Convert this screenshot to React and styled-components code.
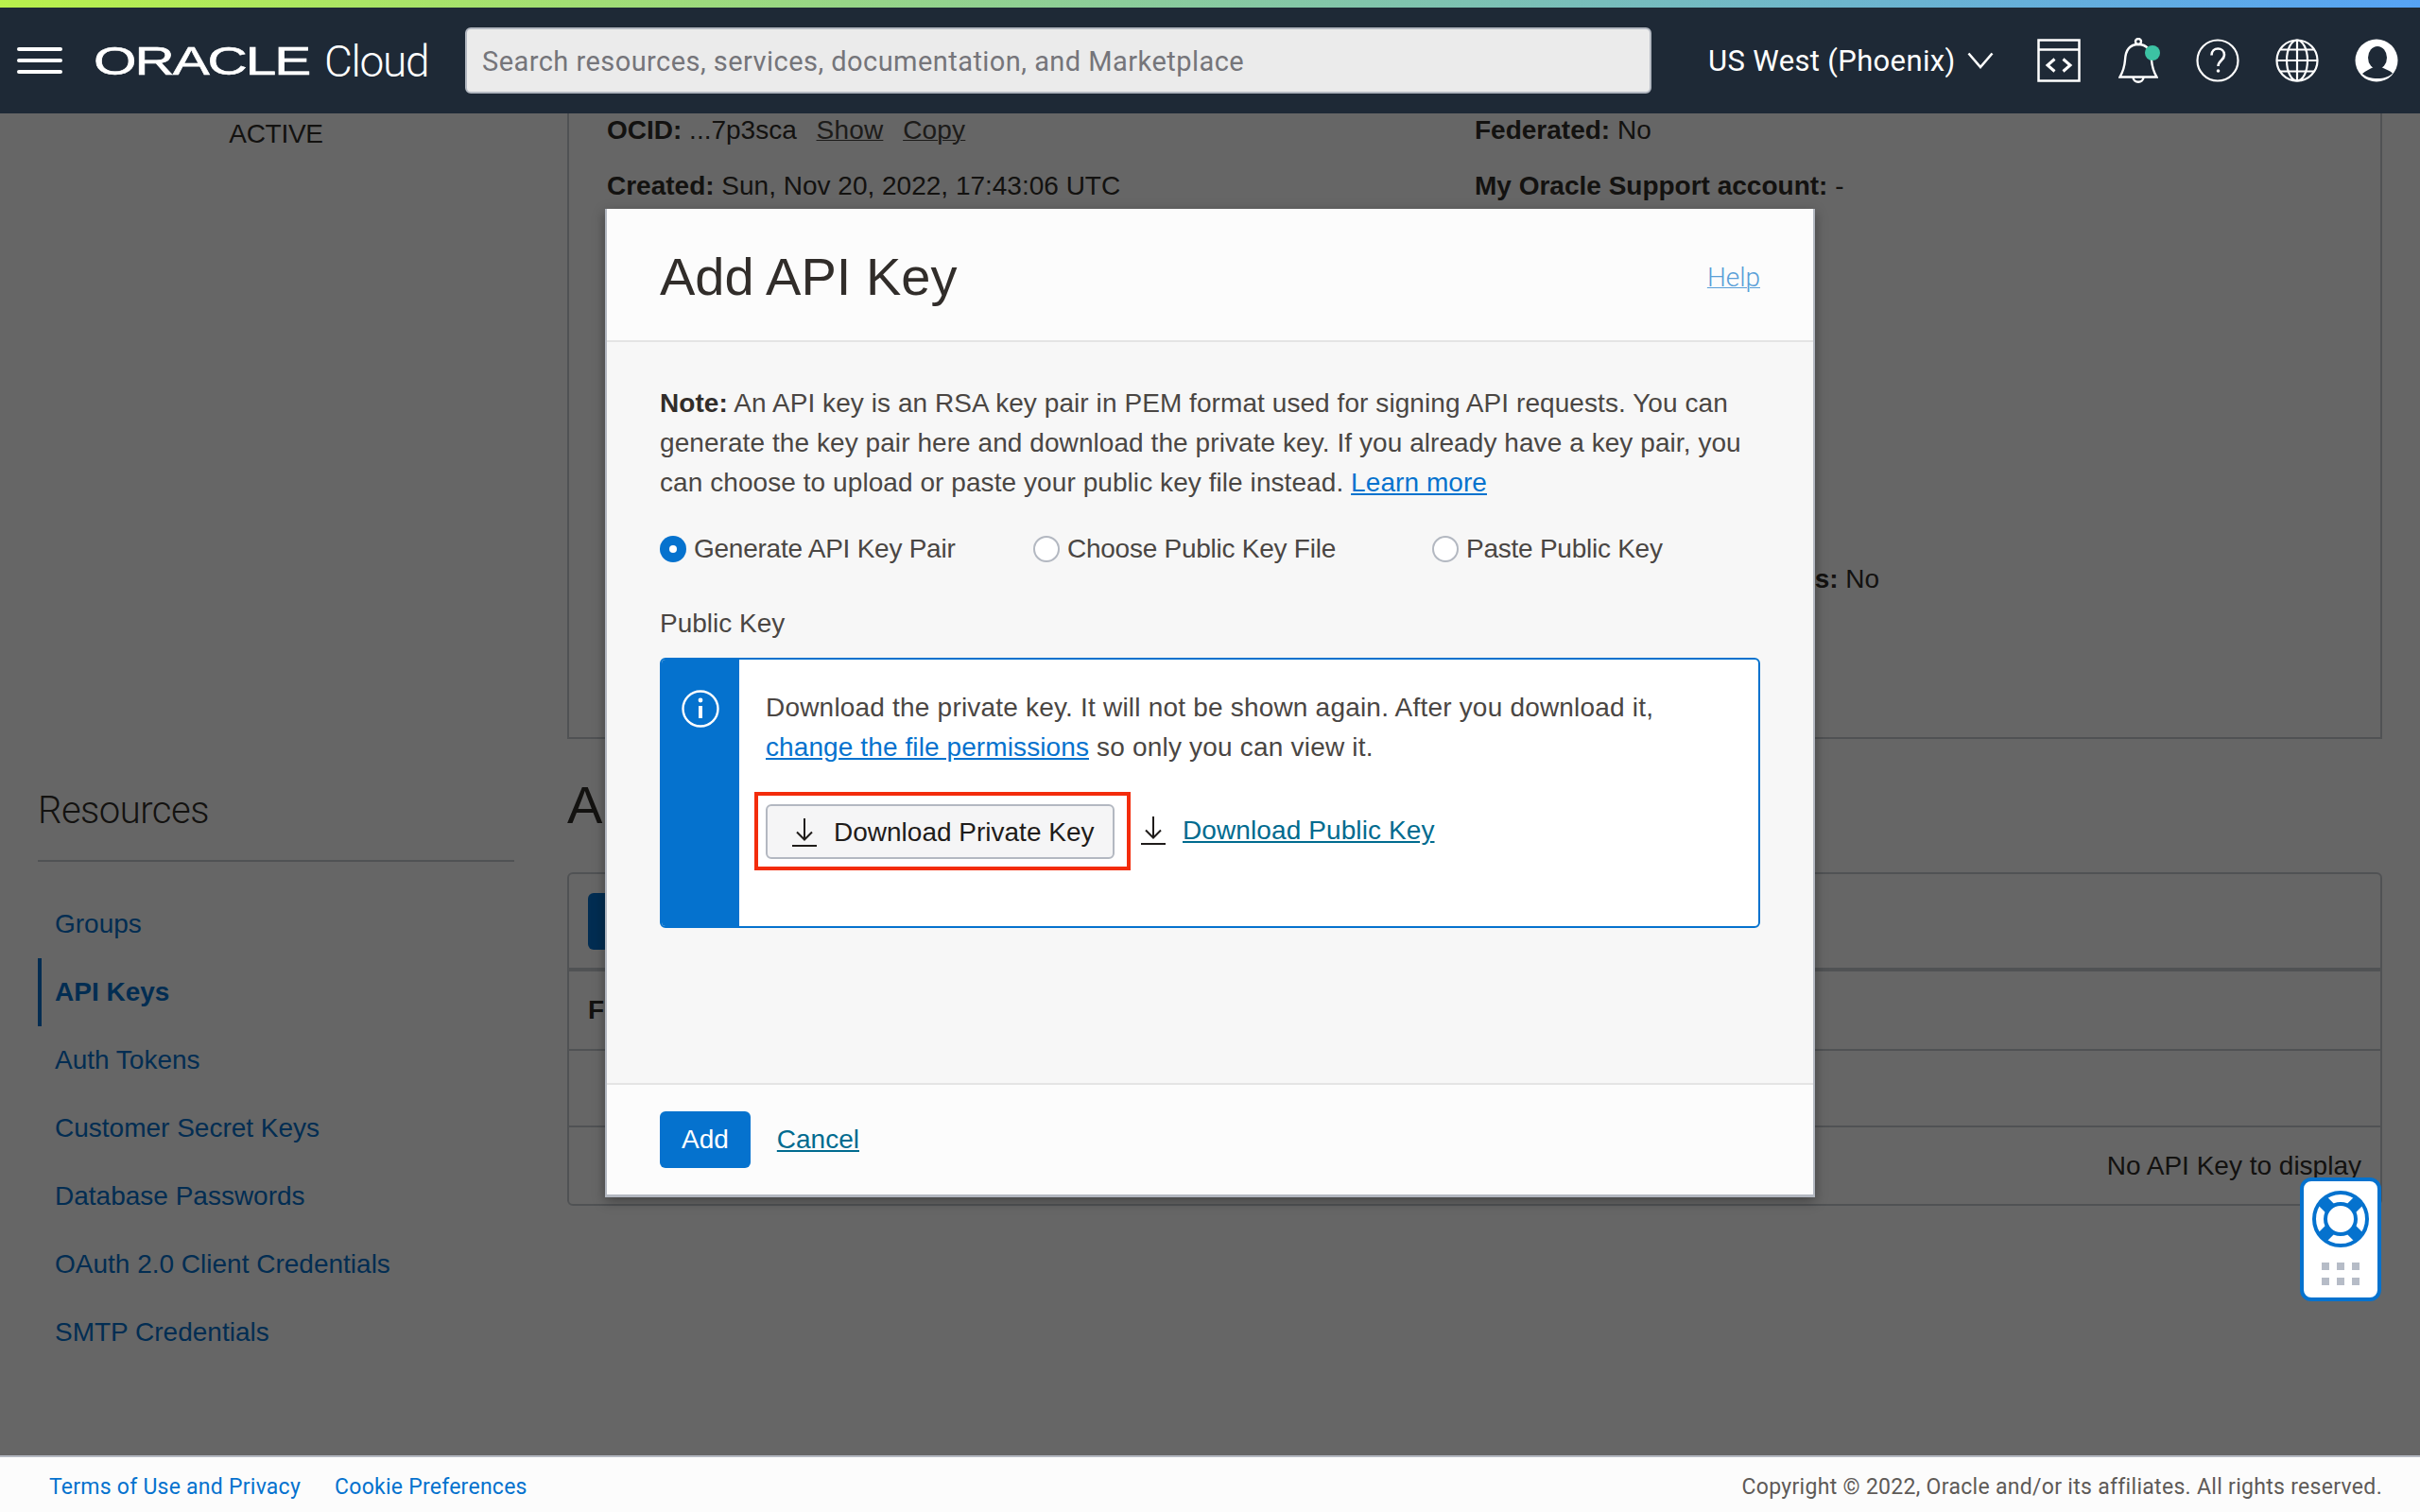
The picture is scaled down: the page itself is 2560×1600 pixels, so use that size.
import React from "react";
import styled, { createGlobalStyle } from "styled-components";

const GlobalStyle = createGlobalStyle`
  html, body {
    margin: 0;
    padding: 0;
    background: #fff;
  }
  * {
    box-sizing: border-box;
  }
  body {
    font-family: "Liberation Sans", Arial, sans-serif;
    color: #312d2a;
  }
`;

const Page = styled.div`
  display: flex;
  flex-direction: column;
  height: 100vh;
  overflow: hidden;
`;
const Stripe = styled.div`
  height: 8px;
  flex: none;
  background: linear-gradient(90deg, #b9f04c 0%, #56a3f5 100%);
`;
const Header = styled.header`
  flex: none;
  display: flex;
  align-items: center;
  height: 112px;
  padding: 0 4px 0 18px;
  background: #1e2936;
  color: #fff;
`;
const Burger = styled.div`
  display: flex;
  flex-direction: column;
  gap: 8px;
  width: 48px;
  margin-right: 33px;
  span {
    height: 4px;
    border-radius: 2px;
    background: #fff;
  }
`;
const Logo = styled.div`
  flex: none;
  display: flex;
  align-items: center;
  width: 365px;
  margin-right: 28px;
`;
const LogoMark = styled.span`
  flex: none;
  display: block;
  width: 229px;
  margin-right: 15px;
  font-size: 43px;
  line-height: 44px;
  letter-spacing: -1.5px;
  -webkit-text-stroke: 0.6px #fff;
  transform: scaleX(1.36);
  transform-origin: left center;
`;
const LogoText = styled.span`
  margin-top: 2px;
  font-family: Roboto, sans-serif;
  font-weight: 300;
  font-size: 46px;
  line-height: 44px;
  letter-spacing: -1.3px;
`;
const SearchBox = styled.div`
  flex: none;
  display: flex;
  align-items: center;
  width: 1255px;
  height: 70px;
  padding: 2px 16px 0;
  background: #ebebeb;
  border: 2px solid #b3b8c1;
  border-radius: 6px;
  color: #75757a;
  font-family: Roboto, sans-serif;
  font-size: 29px;
  letter-spacing: 0.45px;
`;
const Region = styled.div`
  display: flex;
  align-items: center;
  gap: 12px;
  margin-left: 60px;
  font-family: Roboto, sans-serif;
  font-size: 31px;
  letter-spacing: 0.35px;
`;
const IconGroup = styled.div`
  display: flex;
  margin-left: auto;
`;
const IconSlot = styled.div`
  position: relative;
  display: flex;
  justify-content: center;
  align-items: center;
  width: 84px;
`;
const BellDot = styled.span`
  position: absolute;
  top: 8px;
  left: 49px;
  width: 16px;
  height: 16px;
  border-radius: 50%;
  background: #3cc2a3;
`;

const Main = styled.main`
  position: relative;
  flex: 1;
  display: flex;
  min-height: 0;
  overflow: hidden;
  background: #fff;
  font-size: 28px;
`;
const Sidebar = styled.aside`
  flex: none;
  width: 560px;
  margin-left: 40px;
  padding-right: 56px;
`;
const StateLabel = styled.div`
  height: 44px;
  line-height: 44px;
  text-align: center;
  letter-spacing: -0.3px;
  margin-bottom: 670px;
`;
const SideTitle = styled.h2`
  margin: 0;
  height: 48px;
  font-family: Roboto, sans-serif;
  font-size: 40px;
  line-height: 48px;
  font-weight: 300;
  letter-spacing: -0.5px;
`;
const SideRule = styled.div`
  height: 2px;
  margin-top: 28px;
  margin-bottom: 30px;
  background: #c8ccd2;
`;
const SideLink = styled.a`
  display: flex;
  align-items: center;
  height: 72px;
  padding-left: ${(p) => (p.$active ? "14px" : "18px")};
  border-left: ${(p) => (p.$active ? "4px solid #0572ce" : "0")};
  color: #0572ce;
  font-weight: ${(p) => (p.$active ? 700 : 400)};
`;
const Content = styled.section`
  flex: 1;
  min-width: 0;
  margin-right: 40px;
`;
const Details = styled.div`
  display: grid;
  grid-template-columns: 918px 1fr;
  height: 662px;
  padding: 1px 0 0 40px;
  border: 2px solid #c8ccd2;
  border-top: 0;
`;
const DetailCol = styled.div`
  display: flex;
  flex-direction: column;
`;
const DetailRow = styled.div`
  height: 34px;
  line-height: 34px;
  margin-left: ${(p) => p.$indent || 0}px;
  margin-bottom: ${(p) => p.$gap || 25}px;
  white-space: nowrap;
  b {
    font-weight: 700;
  }
  a {
    margin-left: 13px;
    letter-spacing: 0.2px;
    text-decoration: underline;
    text-decoration-thickness: 1px;
    color: #4a4643;
  }
`;
const SectionTitle = styled.h1`
  margin: 39px 0 0;
  height: 62px;
  font-size: 56px;
  line-height: 62px;
  font-weight: 400;
`;
const Table = styled.div`
  margin-top: 40px;
  border: 2px solid #c8ccd2;
  border-radius: 6px;
`;
const Toolbar = styled.div`
  height: 103px;
  padding: 20px;
  border-bottom: 4px solid #c8ccd2;
`;
const PrimaryButton = styled.button`
  height: 60px;
  padding: 0 ${(p) => p.$pad || 22}px;
  border: 0;
  border-radius: 6px;
  background: #0572ce;
  color: #fff;
  font-family: inherit;
  font-size: 28px;
`;
const TableRow = styled.div`
  display: flex;
  align-items: center;
  justify-content: ${(p) => (p.$end ? "flex-end" : "flex-start")};
  height: ${(p) => p.$h || 81}px;
  padding: 0 20px;
  border-bottom: ${(p) => (p.$last ? "0" : "2px solid #c8ccd2")};
  font-weight: ${(p) => (p.$head ? 700 : 400)};
`;

const Overlay = styled.div`
  position: absolute;
  inset: 0;
  display: flex;
  justify-content: center;
  align-items: flex-start;
  padding-top: 101px;
  background: rgba(0, 0, 0, 0.6);
`;
const Modal = styled.div`
  display: flex;
  flex-direction: column;
  width: 1280px;
  height: 1046px;
  background: #f7f7f7;
  border: 2px solid #b3b8c1;
  border-bottom-width: 3px;
  border-top: 0;
  box-shadow: 0 4px 12px rgba(0, 0, 0, 0.35);
`;
const ModalHead = styled.div`
  flex: none;
  display: flex;
  justify-content: space-between;
  align-items: center;
  height: 141px;
  padding: 4px 56px 0;
  background: #fcfcfc;
  border-bottom: 2px solid #e4e4e4;
`;
const ModalTitle = styled.h1`
  margin: 0;
  font-size: 56px;
  font-weight: 400;
  line-height: 64px;
  color: #312d2a;
`;
const HelpLink = styled.a`
  margin-top: 2px;
  color: #5a9fd8;
  font-family: Roboto, sans-serif;
  font-weight: 300;
  font-size: 28px;
  text-decoration: underline;
  text-decoration-thickness: 1px;
`;
const ModalBody = styled.div`
  flex: 1;
  padding: 44px 56px 0;
  color: #4a4643;
`;
const Note = styled.p`
  margin: 0;
  font-size: 28px;
  line-height: 42px;
  letter-spacing: 0.07px;
  b {
    font-weight: 700;
    color: #312d2a;
  }
`;
const TextLink = styled.a`
  color: ${(p) => p.$color || "#0572ce"};
  text-decoration: underline;
`;
const RadioRow = styled.div`
  display: grid;
  grid-template-columns: 395px 422px 1fr;
  margin-top: 28px;
  height: 42px;
`;
const RadioItem = styled.label`
  display: flex;
  align-items: center;
  gap: 8px;
  font-size: 28px;
  letter-spacing: -0.25px;
`;
const RadioMark = styled.span`
  display: flex;
  justify-content: center;
  align-items: center;
  width: 28px;
  height: 28px;
  border-radius: 50%;
  background: ${(p) => (p.$on ? "#0572ce" : "#fff")};
  border: ${(p) => (p.$on ? "0" : "2px solid #b3b8c1")};
  &::after {
    content: "";
    display: ${(p) => (p.$on ? "block" : "none")};
    width: 8px;
    height: 8px;
    border-radius: 50%;
    background: #fff;
  }
`;
const FieldLabel = styled.div`
  margin-top: 37px;
  height: 42px;
  line-height: 42px;
  font-size: 28px;
`;
const InfoBox = styled.div`
  display: flex;
  height: 286px;
  margin-top: 15px;
  background: #fff;
  border: 2px solid #0572ce;
  border-radius: 6px;
  overflow: hidden;
`;
const InfoRail = styled.div`
  flex: none;
  width: 82px;
  padding: 32px 0 0 21px;
  background: #0572ce;
`;
const InfoContent = styled.div`
  flex: 1;
  padding: 30px 0 0 28px;
`;
const InfoText = styled.p`
  margin: 0;
  font-size: 28px;
  line-height: 42px;
  letter-spacing: 0.2px;
  a {
    letter-spacing: 0.1px;
  }
`;
const ActionRow = styled.div`
  display: flex;
  align-items: center;
  margin-top: 26px;
  margin-left: -12px;
`;
const Highlight = styled.div`
  padding: 9px 13px 8px 8px;
  border: 4px solid #f32c0c;
`;
const GhostButton = styled.button`
  display: flex;
  align-items: center;
  gap: 18px;
  width: 369px;
  height: 58px;
  padding: 2px 0 0 26px;
  background: #f5f5f6;
  border: 2px solid #b3b8c1;
  border-radius: 6px;
  color: #1f1c1a;
  font-family: inherit;
  font-size: 28px;
  white-space: nowrap;
`;
const PublicKeyLink = styled.div`
  display: flex;
  align-items: center;
  gap: 18px;
  margin-left: 11px;
  margin-top: -1px;
  font-size: 28px;
  letter-spacing: 0.1px;
`;
const ModalFoot = styled.div`
  flex: none;
  display: flex;
  align-items: center;
  gap: 28px;
  height: 118px;
  padding: 0 56px;
  background: #fcfcfc;
  border-top: 2px solid #e4e4e4;
`;

const HelpWidget = styled.div`
  position: absolute;
  top: 1126px;
  right: 41px;
  display: flex;
  flex-direction: column;
  align-items: center;
  width: 86px;
  height: 131px;
  padding-top: 10px;
  background: #fff;
  border: 4px solid #0572ce;
  border-radius: 12px;
`;
const DotGrid = styled.div`
  display: grid;
  grid-template-columns: repeat(3, 8px);
  gap: 8px;
  margin-top: 16px;
  span {
    height: 8px;
    background: #b6bcc7;
  }
`;

const Footer = styled.footer`
  flex: none;
  display: flex;
  justify-content: space-between;
  align-items: center;
  height: 60px;
  padding: 5px 40px 0 52px;
  background: #fcfcfc;
  border-top: 2px solid #b3b8c1;
  font-family: Roboto, sans-serif;
  font-size: 23px;
  letter-spacing: 0.3px;
`;
const FooterLinks = styled.div`
  display: flex;
  gap: 36px;
  color: #0572ce;
  letter-spacing: 0.25px;
`;
const Copyright = styled.div`
  color: #5e5a57;
`;

const Chevron = () => (
  <svg width="28" height="18" viewBox="0 0 28 18" fill="none" stroke="#fff" strokeWidth="2.6">
    <path d="M1.5 1.5 14 16 26.5 1.5" />
  </svg>
);

const CodeIcon = () => (
  <svg width="46" height="46" viewBox="0 0 46 46" fill="none" stroke="#fff" strokeWidth="2.5">
    <rect x="1.5" y="1.5" width="43" height="43" />
    <path d="M1.5 11.5h43" />
    <path d="M18.5 21.5 11 28l7.5 6.5M27.5 21.5 35 28l-7.5 6.5" strokeWidth="3" />
  </svg>
);

const BellIcon = () => (
  <svg width="42" height="48" viewBox="0 0 42 48" fill="none" stroke="#fff" strokeWidth="2.4">
    <path d="M1.5 41.5c3.5-6 5-11 5.5-18C7.5 13 12 7 21 7s13.5 6 14 16.5c.5 7 2 12 5.5 18z" />
    <circle cx="21" cy="4" r="3" />
    <path d="M15.5 41.5c0 7 11 7 11 0" />
  </svg>
);

const HelpIcon = () => (
  <svg width="46" height="46" viewBox="0 0 46 46" fill="none" stroke="#fff" strokeWidth="2.2">
    <circle cx="23" cy="23" r="21.5" />
    <path d="M16.5 17.5c0-9.5 13.5-9 13.5-.5 0 6-6.5 6-6.5 12" strokeWidth="2.6" />
    <circle cx="23.5" cy="34" r="1.8" fill="#fff" stroke="none" />
  </svg>
);

const GlobeIcon = () => (
  <svg width="46" height="46" viewBox="0 0 46 46" fill="none" stroke="#fff" strokeWidth="2.2">
    <circle cx="23" cy="23" r="21.5" />
    <ellipse cx="23" cy="23" rx="11" ry="21.5" />
    <path d="M23 1.5v43M1.5 23h43M5 11.5h36M5 34.5h36" />
  </svg>
);

const AvatarIcon = () => (
  <svg width="46" height="46" viewBox="0 0 46 46">
    <circle cx="23" cy="23" r="22.5" fill="#fff" />
    <ellipse cx="24" cy="20" rx="10" ry="12" fill="#1e2936" />
    <path d="M8 37c3-3 8-5 12-7h8c4 2 9 3.5 12 6.5-3 3.5-9 5.5-16 5.5-7 0-13-2-16-5z" fill="#1e2936" />
  </svg>
);

const InfoIcon = () => (
  <svg width="40" height="40" viewBox="0 0 40 40" fill="none" stroke="#fff" strokeWidth="2.4">
    <circle cx="20" cy="20" r="18.5" />
    <path d="M20 17v13" strokeWidth="4" />
    <circle cx="20" cy="11" r="2.4" fill="#fff" stroke="none" />
  </svg>
);

const DownloadIcon = () => (
  <svg width="26" height="30" viewBox="0 0 26 30" fill="none" stroke="#1f1c1a" strokeWidth="2">
    <path d="M13 0v22M5 14.5l8 8 8-8" />
    <path d="M0 29h26" />
  </svg>
);

const LifebuoyIcon = () => (
  <svg width="60" height="60" viewBox="0 0 60 60">
    <circle cx="30" cy="30" r="28" fill="#fff" stroke="#0572ce" strokeWidth="4" />
    <path d="M10 10 50 50M50 10 10 50" stroke="#0572ce" strokeWidth="13" />
    <circle cx="30" cy="30" r="16" fill="#fff" stroke="#0572ce" strokeWidth="4" />
  </svg>
);

const sideLinks = [
  "Groups",
  "API Keys",
  "Auth Tokens",
  "Customer Secret Keys",
  "Database Passwords",
  "OAuth 2.0 Client Credentials",
  "SMTP Credentials",
];

const App = () => {
  return (
    <Page>
      <GlobalStyle />
      <Stripe />
      <Header>
        <Burger>
          <span />
          <span />
          <span />
        </Burger>
        <Logo>
          <LogoMark>ORACLE</LogoMark>
          <LogoText>Cloud</LogoText>
        </Logo>
        <SearchBox>Search resources, services, documentation, and Marketplace</SearchBox>
        <Region>
          US West (Phoenix)
          <Chevron />
        </Region>
        <IconGroup>
          <IconSlot>
            <CodeIcon />
          </IconSlot>
          <IconSlot>
            <BellIcon />
            <BellDot />
          </IconSlot>
          <IconSlot>
            <HelpIcon />
          </IconSlot>
          <IconSlot>
            <GlobeIcon />
          </IconSlot>
          <IconSlot>
            <AvatarIcon />
          </IconSlot>
        </IconGroup>
      </Header>
      <Main>
        <Sidebar>
          <StateLabel>ACTIVE</StateLabel>
          <SideTitle>Resources</SideTitle>
          <SideRule />
          {sideLinks.map((item) => (
            <SideLink key={item} $active={item === "API Keys"}>
              {item}
            </SideLink>
          ))}
        </Sidebar>
        <Content>
          <Details>
            <DetailCol>
              <DetailRow>
                <b>OCID:</b> ...7p3sca <a>Show</a> <a>Copy</a>
              </DetailRow>
              <DetailRow>
                <b>Created:</b> Sun, Nov 20, 2022, 17:43:06 UTC
              </DetailRow>
            </DetailCol>
            <DetailCol>
              <DetailRow>
                <b>Federated:</b> No
              </DetailRow>
              <DetailRow $gap={382}>
                <b>My Oracle Support account:</b> -
              </DetailRow>
              <DetailRow $indent={21}>
                <b>Can use SMTP Credentials:</b> No
              </DetailRow>
            </DetailCol>
          </Details>
          <SectionTitle>API Keys</SectionTitle>
          <Table>
            <Toolbar>
              <PrimaryButton>Add API Key</PrimaryButton>
            </Toolbar>
            <TableRow $head $h={84}>
              Fingerprint
            </TableRow>
            <TableRow />
            <TableRow $end $last>
              No API Key to display
            </TableRow>
          </Table>
        </Content>
        <Overlay>
          <Modal>
            <ModalHead>
              <ModalTitle>Add API Key</ModalTitle>
              <HelpLink>Help</HelpLink>
            </ModalHead>
            <ModalBody>
              <Note>
                <b>Note:</b> An API key is an RSA key pair in PEM format used for signing API requests. You can
                generate the key pair here and download the private key. If you already have a key pair, you
                can choose to upload or paste your public key file instead. <TextLink>Learn more</TextLink>
              </Note>
              <RadioRow>
                <RadioItem>
                  <RadioMark $on />
                  Generate API Key Pair
                </RadioItem>
                <RadioItem>
                  <RadioMark />
                  Choose Public Key File
                </RadioItem>
                <RadioItem>
                  <RadioMark />
                  Paste Public Key
                </RadioItem>
              </RadioRow>
              <FieldLabel>Public Key</FieldLabel>
              <InfoBox>
                <InfoRail>
                  <InfoIcon />
                </InfoRail>
                <InfoContent>
                  <InfoText>
                    Download the private key. It will not be shown again. After you download it,
                    <br />
                    <TextLink>change the file permissions</TextLink> so only you can view it.
                  </InfoText>
                  <ActionRow>
                    <Highlight>
                      <GhostButton>
                        <DownloadIcon />
                        Download Private Key
                      </GhostButton>
                    </Highlight>
                    <PublicKeyLink>
                      <DownloadIcon />
                      <TextLink $color="#006b8f">Download Public Key</TextLink>
                    </PublicKeyLink>
                  </ActionRow>
                </InfoContent>
              </InfoBox>
            </ModalBody>
            <ModalFoot>
              <PrimaryButton $pad={23}>Add</PrimaryButton>
              <TextLink $color="#006b8f">Cancel</TextLink>
            </ModalFoot>
          </Modal>
        </Overlay>
        <HelpWidget>
          <LifebuoyIcon />
          <DotGrid>
            <span />
            <span />
            <span />
            <span />
            <span />
            <span />
          </DotGrid>
        </HelpWidget>
      </Main>
      <Footer>
        <FooterLinks>
          <span>Terms of Use and Privacy</span>
          <span>Cookie Preferences</span>
        </FooterLinks>
        <Copyright>Copyright © 2022, Oracle and/or its affiliates. All rights reserved.</Copyright>
      </Footer>
    </Page>
  );
};

export default App;
